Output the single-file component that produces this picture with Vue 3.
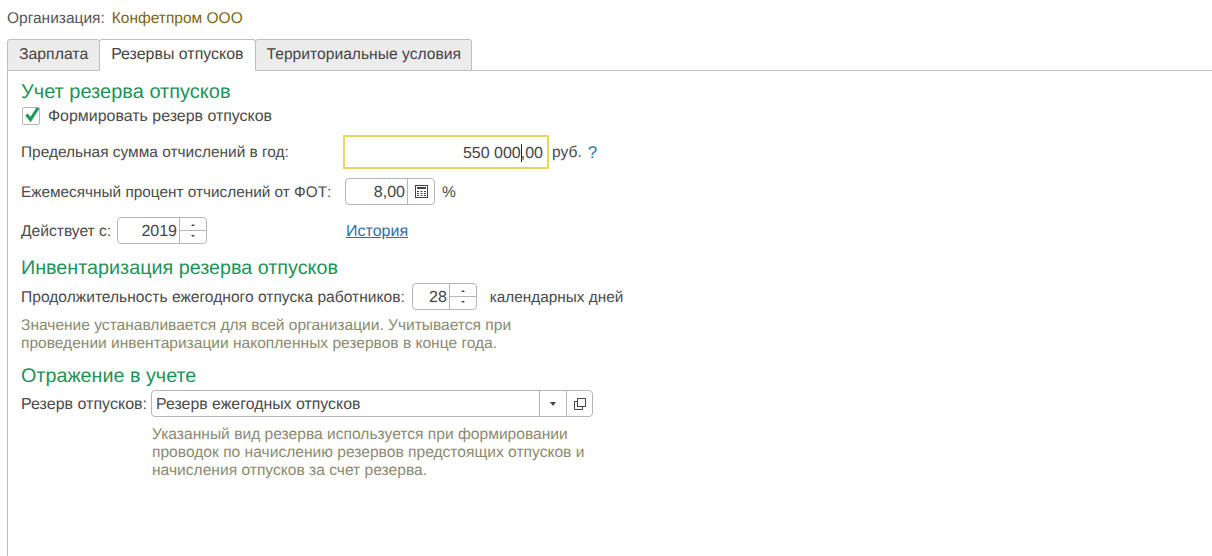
<script setup>
const tabs = [
  { label: 'Зарплата', active: false, cls: 'tab-a' },
  { label: 'Резервы отпусков', active: true, cls: 'tab-b' },
  { label: 'Территориальные условия', active: false, cls: 'tab-c' }
]
</script>

<template>
  <div class="page">
    <div class="org"><span class="org-label">Организация:</span><span class="org-name">Конфетпром ООО</span></div>
    <div class="tabs">
      <div v-for="t in tabs" :key="t.label" class="tab" :class="[t.cls, { active: t.active }]">{{ t.label }}</div>
      <div class="tab-rest"></div>
    </div>
    <div class="panel">
      <h2 class="h h1">Учет резерва отпусков</h2>
      <div class="check-row">
        <span class="box">
          <svg width="20" height="20" viewBox="0 0 20 20"><path d="M4.5 9.5 L8.5 14.5 L16 3" fill="none" stroke="#1f9a5b" stroke-width="3.2"/></svg>
        </span>
        <span class="check-text">Формировать резерв отпусков</span>
      </div>
      <div class="row sum-row">
        <span class="lbl t-sum">Предельная сумма отчислений в год:</span>
        <div class="focus-input"><span class="num">550 000<i class="caret"></i>,00</span></div>
        <span class="unit">руб.</span>
        <span class="help">?</span>
      </div>
      <div class="row pct-row">
        <span class="lbl t-pct">Ежемесячный процент отчислений от ФОТ:</span>
        <div class="field calc">
          <span class="val">8,00</span>
          <span class="btn calc-btn">
            <svg width="13" height="13" viewBox="0 0 13 13"><rect x="0.5" y="0.5" width="12" height="12" fill="none" stroke="#444"/><rect x="2" y="2" width="9" height="2" fill="#444"/><path d="M2 6h2v1H2zM5.5 6h2v1h-2zM9 6h2v1H9zM2 8h2v1H2zM5.5 8h2v1h-2zM9 8h2v1H9zM2 10h2v1H2zM5.5 10h2v1h-2zM9 10h2v1H9z" fill="#444"/></svg>
          </span>
        </div>
        <span class="pct">%</span>
      </div>
      <div class="row year-row">
        <span class="lbl-year">Действует с:</span>
        <div class="field spin year">
          <span class="val">2019</span>
          <span class="btn spin-btn"><span class="up"></span><span class="down"></span></span>
        </div>
        <a class="link">История</a>
      </div>
      <h2 class="h h2">Инвентаризация резерва отпусков</h2>
      <div class="row days-row">
        <span class="t-days">Продолжительность ежегодного отпуска работников:</span>
        <div class="field spin days">
          <span class="val">28</span>
          <span class="btn spin-btn"><span class="up"></span><span class="down"></span></span>
        </div>
        <span class="days-unit">календарных дней</span>
      </div>
      <p class="note note-a">Значение устанавливается для всей организации. Учитывается при<br>проведении инвентаризации накопленных резервов в конце года.</p>
      <h2 class="h h3">Отражение в учете</h2>
      <div class="row acc-row">
        <span class="t-acc">Резерв отпусков:</span>
        <div class="field acc">
          <span class="val-left">Резерв ежегодных отпусков</span>
          <span class="btn drop"><span class="tri"></span></span>
          <span class="btn open">
            <svg width="12" height="12" viewBox="0 0 12 12"><rect x="3.5" y="0.5" width="8" height="8" fill="none" stroke="#444"/><path d="M3.5 3.5H0.5V11.5H8.5V8.5" fill="none" stroke="#444"/></svg>
          </span>
        </div>
      </div>
      <p class="note note-b">Указанный вид резерва используется при формировании<br>проводок по начислению резервов предстоящих отпусков и<br>начисления отпусков за счет резерва.</p>
    </div>
  </div>
</template>

<style>
html, body { margin: 0; background: #fff; }
</style>

<style scoped>
.page {
  width: 1212px;
  height: 556px;
  overflow: hidden;
  box-sizing: border-box;
  padding-left: 7px;
  font-family: "Liberation Sans", Arial, sans-serif;
  font-size: 15.6px;
  text-rendering: geometricPrecision;
  color: #4a4a4a;
  display: flex;
  flex-direction: column;
}
.org { height: 39px; padding-top: 10px; box-sizing: border-box; line-height: 18px; font-size: 15.5px; }
.org-label { color: #555; margin-right: 7px; }
.org-name { color: #7a6410; }
.tabs { display: flex; height: 32px; }
.tab {
  box-sizing: border-box;
  height: 32px;
  padding: 0 11px;
  line-height: 29px;
  background: #ececec;
  border: 1px solid #bdbdbd;
  border-radius: 3px 3px 0 0;
  margin-right: -1px;
  color: #444;
}
.tab-a { font-size: 15.8px; }
.tab-b { font-size: 15.95px; }
.tab-c { font-size: 15.65px; padding: 0 10px 0 11px; }
.tab.active { background: #fff; border-bottom-color: #fff; position: relative; }
.tab-rest { flex: 1; border-bottom: 1px solid #bdbdbd; margin-left: 1px; }
.panel {
  flex: 1;
  border-left: 1px solid #bdbdbd;
  padding-left: 13px;
}
.h {
  margin: 0;
  font-weight: 400;
  font-size: 19.75px;
  line-height: 22px;
  color: #1d9257;
}
.h1 { margin: 10px 0 -1px; font-size: 20px; }
.check-row { display: flex; align-items: center; height: 20px; margin-top: 4px; padding-left: 1px; font-size: 15.95px; }
.check-text { padding-top: 2px; }
.box {
  box-sizing: border-box;
  width: 18px;
  height: 18px;
  border: 1px solid #b5b5b5;
  border-radius: 2px;
  margin-right: 8px;
  display: block;
  position: relative;
}
.box svg { position: absolute; left: -1px; top: -3px; }
.row { display: flex; align-items: center; }
.row > span { padding-top: 2px; }
.sum-row { height: 34px; margin-top: 9px; }
.lbl { width: 322px; flex: none; }
.t-sum { font-size: 15.45px; }
.t-pct { font-size: 15.35px; }
.t-days { font-size: 15.6px; }
.t-acc { font-size: 16.05px; }
.focus-input {
  box-sizing: border-box;
  width: 206px;
  height: 34px;
  border: 2px solid #e6d75a;
  display: flex;
  justify-content: flex-end;
  align-items: center;
  padding: 2px 4px 0 0;
  font-size: 16px;
  color: #444;
}
.caret {
  display: inline-block;
  width: 1px;
  height: 18px;
  margin-right: -1px;
  vertical-align: -4px;
  background: #222;
}
.unit { margin-left: 3px; }
.help { margin-left: 6px; color: #1f7a9a; font-size: 17px; }
.field {
  box-sizing: border-box;
  height: 27px;
  border: 1px solid #b5b5b5;
  border-radius: 4px;
  display: flex;
  align-items: stretch;
  background: #fff;
  font-size: 16px;
}
.row > .field { flex: none; }
.val { flex: 1; text-align: right; line-height: 27px; padding-right: 2px; color: #444; }
.val-left { flex: 1; line-height: 27px; padding-left: 4px; font-size: 15.9px; }
.btn { border-left: 1px solid #b5b5b5; display: flex; align-items: center; justify-content: center; flex: none; }
.pct-row { height: 27px; margin-top: 9px; }
.lbl + .calc { margin-left: 2px; }
.calc { width: 90px; }
.calc-btn { width: 26px; }
.pct { margin-left: 7px; }
.year-row { height: 27px; margin-top: 12px; }
.lbl-year { width: 96px; flex: none; }
.year { width: 90px; }
.spin-btn { width: 26px; flex-direction: column; position: relative; }
.spin-btn::after { content: ""; position: absolute; left: 0; right: 0; top: 12px; height: 1px; background: #b5b5b5; }
.up, .down { width: 0; height: 0; border-left: 2px solid transparent; border-right: 2px solid transparent; }
.up { border-bottom: 2px solid #444; margin-bottom: 9px; }
.down { border-top: 2px solid #444; }
.link { margin-left: 139px; padding-top: 2px; color: #2f6f9f; text-decoration: underline; font-size: 16px; }
.h2 { margin: 13px 0 -1px; }
.days-row { height: 27px; margin-top: 5px; }
.days { width: 65px; margin-left: 7px; }
.days-unit { margin-left: 13px; font-size: 15.35px; }
.note { margin: 0; color: #8a8a6e; line-height: 18px; }
.note-a { margin: 7px 0 -1px; font-size: 15.55px; }
.h3 { margin: 13px 0 0; }
.acc-row { height: 27px; margin-top: 3px; }
.acc { width: 442px; margin-left: 4px; }
.drop { width: 26px; }
.open { width: 25px; }
.tri { width: 0; height: 0; border-left: 3px solid transparent; border-right: 3px solid transparent; border-top: 4px solid #444; }
.note-b { margin-top: 9px; margin-left: 131px; }
</style>
